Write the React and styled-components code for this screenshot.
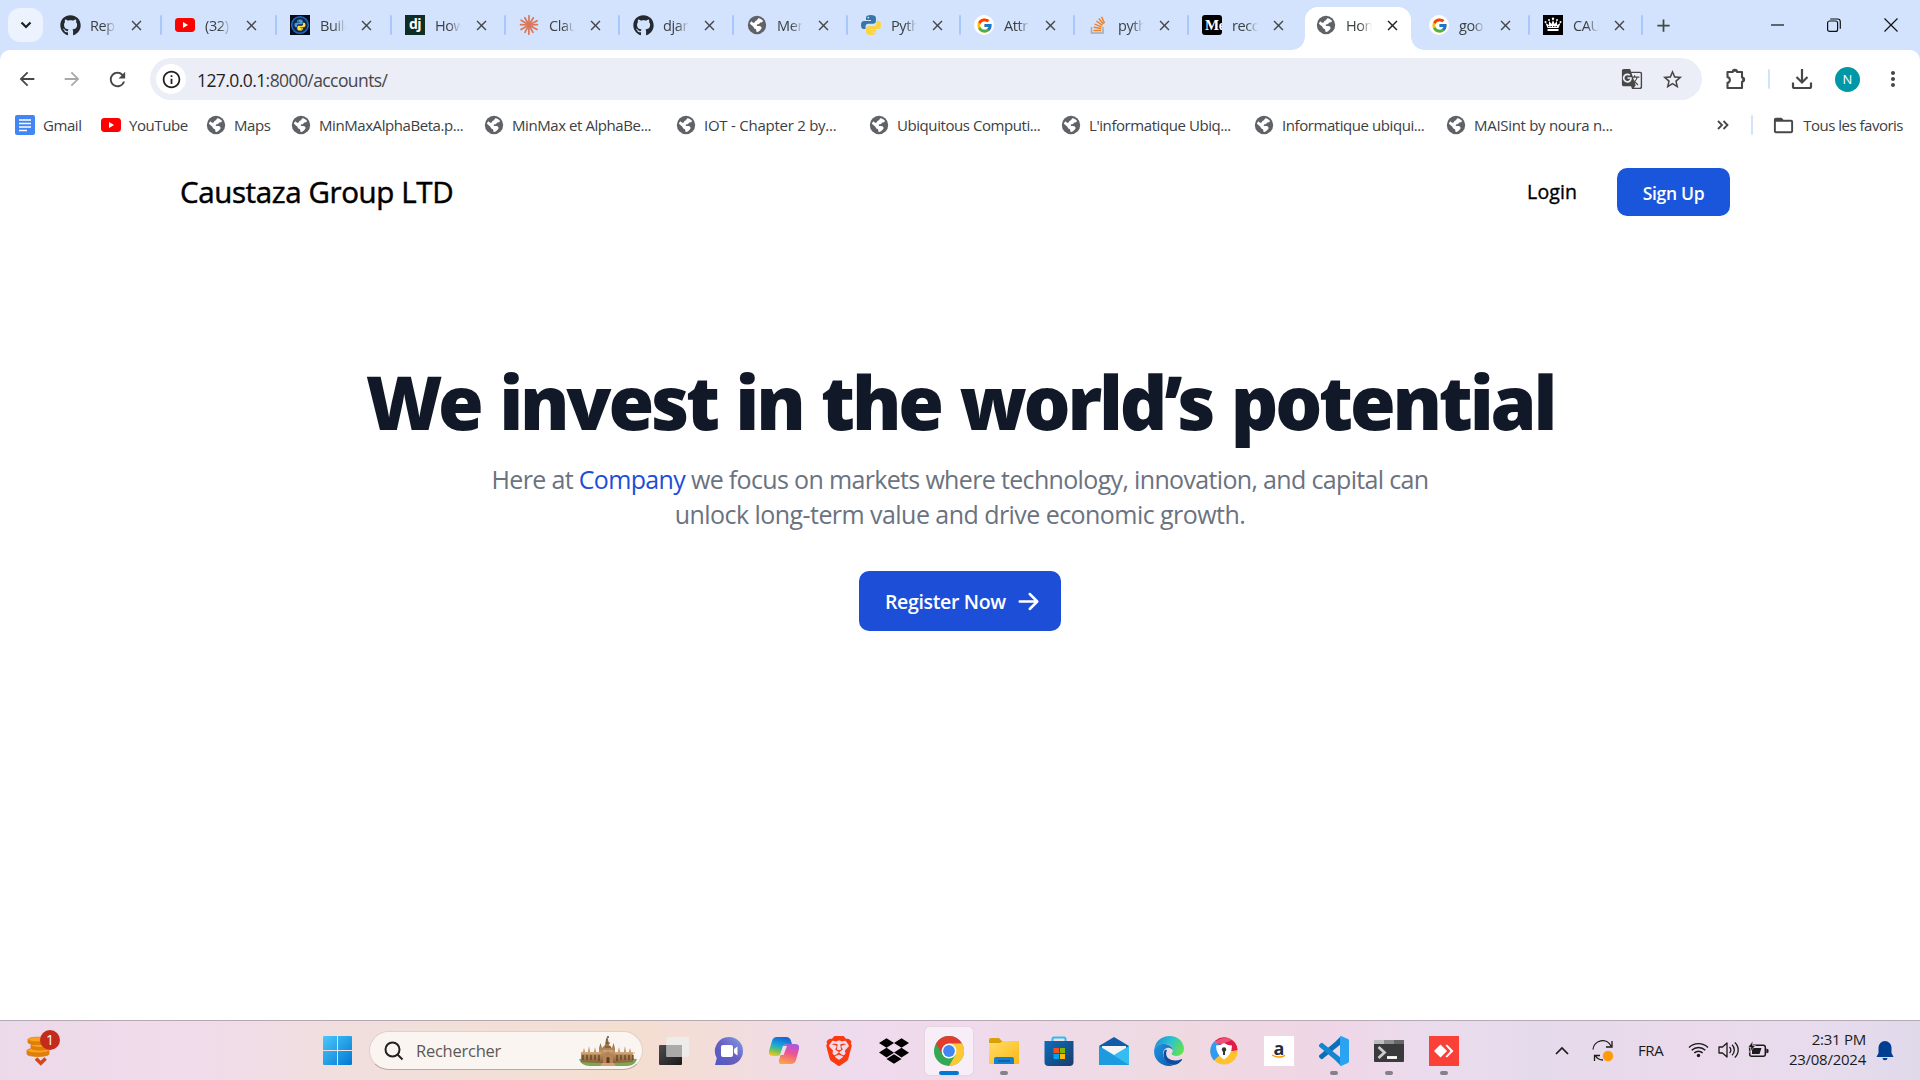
import React from "react";
import styled, { createGlobalStyle, css } from "styled-components";
import { FaGithub, FaDropbox } from "react-icons/fa";
import { FcGoogle } from "react-icons/fc";
import {
  MdArrowBack, MdArrowForward, MdRefresh, MdInfoOutline, MdStarOutline,
  MdMoreVert, MdClose, MdAdd, MdGTranslate, MdFolderOpen,
} from "react-icons/md";
import { SiBrave } from "react-icons/si";

const GlobalStyle = createGlobalStyle`
  * { box-sizing: border-box; }
  html, body { margin: 0; background: #fff; overflow: hidden; }
  body { font-family: "Open Sans", "Noto Sans", sans-serif; }
  svg { display: block; flex: none; }
`;

/* ---------- shell ---------- */
const Screen = styled.div`
  width: 1920px; height: 1080px; display: flex; flex-direction: column; overflow: hidden;
`;

/* ---------- tab strip ---------- */
const TabStrip = styled.div`
  height: 50px; background: #d3e3fd; display: flex; align-items: stretch; padding-left: 8px; flex: none;
`;
const TabSearch = styled.div`
  width: 35px; height: 34px; margin: 8px 3px 8px 0; border-radius: 12px; background: #ecf2fe;
  display: flex; align-items: center; justify-content: center; color: #1f1f1f;
`;
const TabBox = styled.div`
  position: relative; width: ${(p) => p.$w}px; flex: none; display: flex; align-items: center;
  padding-left: 14px; color: #3c4043;
  ${(p) => p.$active && css`
    &::before {
      content: ""; position: absolute; left: 3px; right: 4px; top: 7px; bottom: 0;
      background: #fff; border-radius: 13px 13px 0 0;
    }
    &::after {
      content: ""; position: absolute; left: -10px; right: -9px; bottom: 0; height: 13px;
      background:
        radial-gradient(circle at 0 0, transparent 12.5px, #fff 13px) left / 13px 13px no-repeat,
        radial-gradient(circle at 13px 0, transparent 12.5px, #fff 13px) right / 13px 13px no-repeat;
    }
  `}
`;
const TabIcon = styled.div`
  width: 20px; height: 20px; flex: none; z-index: 1; display: flex; align-items: center; justify-content: center;
`;
const TabTitle = styled.div`
  width: 36px; margin-left: 10px; white-space: nowrap; z-index: 1;
  font-size: 14.5px; letter-spacing: -0.4px; line-height: 22px; padding-top: 1px;
  mask-image: linear-gradient(90deg, #000 14px, transparent 26px);
`;
const TabClose = styled.div`
  width: 16px; margin-left: 2px; z-index: 1; color: ${(p) => (p.$active ? "#1f1f1f" : "#444746")};
`;
const TabSep = styled.div`
  width: 2px; height: 20px; background: #a8c7fa; margin-left: auto; margin-right: -1px; border-radius: 1px;
`;
const NewTab = styled.div`
  width: 42px; display: flex; align-items: center; justify-content: center; color: #444746;
`;
const WindowButtons = styled.div`
  margin-left: auto; display: flex; align-items: center; gap: 43px; padding-right: 22px;
`;

/* ---------- toolbar ---------- */
const ToolbarBack = styled.div`background: #d3e3fd; flex: none;`;
const Toolbar = styled.div`
  height: 58px; background: #fff; border-radius: 10px 10px 0 0; display: flex; align-items: center;
  padding: 0 15px 0 16px; color: #474747;
`;
const NavButton = styled.div`
  width: ${(p) => p.$w || 22}px; margin-left: ${(p) => p.$ml || 0}px; margin-right: ${(p) => p.$mr || 0}px;
  display: flex; justify-content: center; color: ${(p) => p.$c || "#474747"};
`;
const AddressBar = styled.div`
  width: 1553px; height: 42px; border-radius: 21px; background: #ebedf7; margin-right: 23px;
  display: flex; align-items: center; padding: 0 19px 0 6px;
`;
const SiteInfo = styled.div`
  width: 30px; height: 30px; border-radius: 50%; background: #fff; color: #1f1f1f;
  display: flex; align-items: center; justify-content: center;
`;
const Url = styled.div`
  margin-left: 11px; font-size: 17.5px; letter-spacing: -0.58px; color: #474747; flex: 1; padding-top: 1px;
`;
const Host = styled.span`color: #1f1f1f;`;
const Divider = styled.div`
  width: 2px; height: 20px; background: #d3e3fd; border-radius: 1px; margin-left: ${(p) => p.$ml || 0}px;
`;
const Avatar = styled.div`
  width: 25px; height: 25px; border-radius: 50%; background: #0097a7; color: #fff; margin: 0 21px 0 20px;
  font-size: 13px; display: flex; align-items: center; justify-content: center;
`;

/* ---------- bookmarks ---------- */
const Bookmarks = styled.div`
  height: 36px; background: #fff; display: flex; align-items: center; padding: 0 17px 2px 15px; flex: none;
  font-size: 15px; color: #3c4043;
`;
const Bookmark = styled.div`
  width: ${(p) => p.$w}px; flex: none; display: flex; align-items: center; gap: 8px; white-space: nowrap;
  letter-spacing: ${(p) => p.$ls || -0.43}px;
`;
const BookmarkEnd = styled.div`
  margin-left: auto; display: flex; align-items: center; letter-spacing: -0.5px; white-space: nowrap;
`;
const AllBookmarks = styled.div`display: flex; align-items: center; gap: 8px; margin-left: 19px;`;

/* ---------- page ---------- */
const Page = styled.main`flex: 1; background: #fff; display: flex; flex-direction: column;`;
const SiteNav = styled.nav`
  height: 96px; padding: 0 190px 0 180px; display: flex; align-items: center; color: #000;
`;
const Brand = styled.div`
  font-size: 29.5px; letter-spacing: -0.38px; flex: 1; white-space: nowrap; padding-bottom: 2px;
  -webkit-text-stroke: 0.5px #000;
`;
const LoginLink = styled.a`
  font-size: 19.5px; margin-right: 40px; letter-spacing: 0.1px; padding-bottom: 2px; -webkit-text-stroke: 0.35px #000;
`;
const SignUp = styled.button`
  width: 113px; height: 48px; border: 0; border-radius: 10px; background: #1a56db; color: #fff; padding: 2px 0 0;
  font: 600 17.5px "Open Sans", sans-serif; letter-spacing: -0.3px;
`;
const Hero = styled.section`
  display: flex; flex-direction: column; align-items: center; padding-top: 124px;
`;
const Headline = styled.h1`
  margin: 0; font-family: "Noto Sans", "Open Sans", sans-serif; font-weight: 900; font-size: 74px; line-height: 75px;
  letter-spacing: -3.2px; word-spacing: 2.5px; color: #111827; white-space: nowrap;
`;
const Lead = styled.p`
  margin: 23px 0 0; font-size: 25px; line-height: 35px; letter-spacing: -0.66px; color: #6b7280; text-align: center;
  white-space: nowrap;
`;
const LeadTail = styled.span`letter-spacing: -0.55px;`;
const Company = styled.span`color: #1d4ed8;`;
const Register = styled.button`
  margin-top: 39px; width: 202px; height: 60px; border: 0; border-radius: 10px; background: #1d4ed8; color: #fff;
  display: flex; align-items: center; justify-content: space-between; padding: 0 20px 0 26px;
  font: 600 19.5px "Open Sans", sans-serif; letter-spacing: -0.35px; white-space: nowrap;
`;

/* ---------- taskbar ---------- */
const Taskbar = styled.footer`
  height: 60px; flex: none; border-top: 1px solid #b5a9b4; display: flex; align-items: center; color: #1b1b1b;
  background: linear-gradient(90deg, #ecd9e9 0%, #efdbea 7%, #f0dcea 11%, #f0dfdd 18%, #f2dfd6 28%, #f4decf 33%, #f2dddc 38%, #eedbed 44%, #f0daec 50%, #eedbe6 57%, #efd9e1 62%, #efd6e6 69%, #eadced 75%, #e5daec 80%, #ebdaeb 88%, #e7dcee 95%, #e0d9ea 100%);
`;
const Widget = styled.div`width: 323px; padding-left: 26px;`;
const SearchBox = styled.div`
  width: 274px; height: 39px; margin-left: 17px; border-radius: 20px; background: #fbf5f2; border: 1px solid #e2cfc9;
  border-bottom-color: #b9a7a3; display: flex; align-items: center; padding: 0 4px 0 14px; font-size: 16.5px; color: #5d5855;
`;
const SearchText = styled.span`margin-left: 12px; letter-spacing: -0.25px; flex: 1;`;
const AppRow = styled.div`display: flex; margin-left: 3px;`;
const AppSlot = styled.div`
  width: 55.05px; height: 60px; display: flex; align-items: center; justify-content: center; position: relative;
`;
const AppTile = styled.div`
  width: 48px; height: 48px; border-radius: 5px; display: flex; align-items: center; justify-content: center;
  ${(p) => p.$on && css`background: #f8eef7; box-shadow: 0 0 1px 1px #e5d5e3;`}
`;
const Running = styled.div`
  position: absolute; bottom: 6px; left: 50%; transform: translateX(-50%); height: 4px; border-radius: 2px;
  width: ${(p) => (p.$on ? 20 : 8)}px; background: ${(p) => (p.$on ? "#0078d4" : "#86808a")};
`;
const Tray = styled.div`margin-left: auto; display: flex; align-items: center; gap: 0; padding-right: 26px;`;
const Chevron = styled.div`margin-right: 23px;`;
const Lang = styled.div`font-size: 15px; letter-spacing: -0.4px; width: 28px; margin: 0 22px 0 24px; padding-bottom: 2px;`;
const TrayIcons = styled.div`display: flex; gap: 9px; align-items: center; padding-bottom: 2px;`;
const Clock = styled.div`
  width: 80px; margin: 0 10px 0 17px; text-align: right; font-size: 15px; line-height: 20px; letter-spacing: -0.25px;
  white-space: nowrap; padding-bottom: 4px;
`;

/* ---------- drawings ---------- */
const Globe = () => (
  <svg width="20" height="20" viewBox="0 0 20 20">
    <circle cx="10" cy="10" r="9.200" fill="#5f6368" />
    <path d="M11.400 3.200c2 .3 3.600 1.300 4.700 2.900-.6 1.500-1.800 1.300-2.700 1.500-1 .2-.7 1.600-1.900 1.700-1.300.1-2 .4-1.700 1.200.6 1 2.300.3 3.600.8 1.500.7 1.500 2.300.4 3.100-1.200.8-1.400 2.200-3.500 2.500-.9.100-1.100-.5-1-1.300.100-1.200-.5-1.600-1.500-1.900-1.200-.4-.9-1.500-1.700-2.200L2.900 8.800c.3-1 .7-1.800 1.300-2.600l1.900 1.500c.9.400 1.700-.1 1.900-.9.2-1.100 1.300-.9 2-1.500.6-.6.4-1.500 1.400-2.100z" fill="#fff" />
  </svg>
);
const YouTube = () => (
  <svg width="20" height="20" viewBox="0 0 20 20">
    <rect y="3" width="20" height="14" rx="3.400" fill="#f00" /><path d="M8 7l5 3-5 3z" fill="#fff" />
  </svg>
);
const PY_BLUE = "M9.9 0C6.6 0 5 .9 5 2.8V5h5v1H3C1 6 0 7.600 0 10s1 4 2.700 4H4.500v-2.500c0-1.600 1.200-2.800 2.800-2.800h5c1.500 0 2.600-1 2.600-2.500V2.800C14.900 1 13 0 9.900 0zM7.300 1.700a.9.9 0 110 1.800.9.9 0 010-1.800z";
const Python = () => (
  <svg width="20" height="20" viewBox="0 0 20 20">
    <path d={PY_BLUE} fill="#3776ab" /><path d={PY_BLUE} fill="#ffd43b" transform="rotate(180 10 10)" />
  </svg>
);
const PythonTile = () => (
  <svg width="20" height="20" viewBox="0 0 20 20">
    <rect width="20" height="20" fill="#060b18" /><circle cx="10" cy="10" r="8.300" fill="#10284a" stroke="#1c66c4" strokeWidth="1.600" />
    <g transform="translate(4.500 4.500) scale(.55)"><path d={PY_BLUE} fill="#4b9be0" /><path d={PY_BLUE} fill="#ffe03b" transform="rotate(180 10 10)" /></g>
  </svg>
);
const LetterTile = styled.div`
  width: 20px; height: 20px; overflow: hidden; background: ${(p) => p.$bg}; color: #fff; border-radius: ${(p) => p.$r || 0}px;
  font: 700 ${(p) => p.$fs}px/${(p) => p.$lh}px ${(p) => p.$ff}; padding-left: ${(p) => p.$pl}px; letter-spacing: -0.5px;
`;
const Burst = () => (
  <svg width="20" height="20" viewBox="-10 -10 20 20" stroke="#d97757" strokeWidth="1.700" strokeLinecap="round">
    {[0, 31, 62, 88, 120, 152, 181, 209, 240, 272, 301, 330].map((a, i) => (
      <line key={a} x1="0" y1="0" x2="0" y2={i % 2 ? -8.4 : -9.2} transform={`rotate(${a})`} />
    ))}
  </svg>
);
const GoogleDisc = styled.div`
  width: 20px; height: 20px; border-radius: 50%; background: #fff; display: flex; align-items: center; justify-content: center;
`;
const Google = () => <GoogleDisc><FcGoogle size={17} /></GoogleDisc>;
const Stack = () => (
  <svg width="20" height="20" viewBox="0 0 20 20" fill="none" strokeWidth="1.500">
    <path d="M3.500 12v6h11.500v-6" stroke="#a9a9ae" /><path d="M5.500 15.500h7.500M5.700 12.300l7.400 1.200M6.600 9.100l6.900 2.800M8.400 6l6 4.300M10.800 3.500l4.600 5.600M13.600 1.700l2.900 6.600" stroke="#f48024" />
  </svg>
);
const Crown = () => (
  <svg width="20" height="20" viewBox="0 0 20 20">
    <rect width="20" height="20" fill="#000" />
    <g fill="#fff"><path d="M4.500 13L2.500 8l3.400 2L6 6l2.500 3L10 5l1.500 4L14 6l.1 4 3.400-2-2 5z" /><rect x="4.500" y="14" width="11" height="2" />
      <circle cx="2.500" cy="7" r="1" /><circle cx="6" cy="5" r="1" /><circle cx="10" cy="3.800" r="1.200" /><circle cx="14" cy="5" r="1" /><circle cx="17.500" cy="7" r="1" /></g>
    <path d="M5 11.500h10" stroke="#000" strokeWidth=".8" strokeDasharray="1.500 1" />
  </svg>
);
const DocIcon = () => (
  <svg width="20" height="20" viewBox="0 0 20 20">
    <rect width="20" height="20" rx="2" fill="#4285f4" /><path d="M4 5h12M4 8.500h12M4 12h12M4 15.500h8" stroke="#fff" strokeWidth="1.600" />
  </svg>
);
const Puzzle = () => (
  <svg width="22" height="22" viewBox="0 0 22 22" fill="none" stroke="#474747" strokeWidth="2.100" strokeLinejoin="round">
    <path d="M2.500 4h5.300a2.100 2.100 0 014.200 0H17v5.500a2.100 2.100 0 010 4.200V20H2.500v-5.200a2.900 2.900 0 000-5.700z" />
    <path d="M8 3.800a2 2 0 014 0zM17.200 9.700a2 2 0 010 4z" fill="#474747" stroke="none" />
  </svg>
);
const Download = () => (
  <svg width="22" height="22" viewBox="0 0 22 22" fill="none" stroke="#474747" strokeWidth="2.200">
    <path d="M11 1v13M5.500 9l5.500 5.500L16.500 9M2 14.500v4q0 1.500 1.500 1.500h15q1.500 0 1.500-1.500v-4" />
  </svg>
);
const Coins = () => (
  <svg width="36" height="44" viewBox="0 0 36 44">
    <g stroke="#d97706" strokeWidth=".7">
      <path d="M1 21.500V25c0 3.300 22 3.300 22 0v-3.500z" fill="#e07f0a" /><ellipse cx="12" cy="21.500" rx="11" ry="2.500" fill="#fba31f" />
      <path d="M5 16v3c0 2.800 18 2.800 18 0v-3z" fill="#e07f0a" /><ellipse cx="14" cy="16" rx="9" ry="2.300" fill="#fba31f" />
      <path d="M2 10.500v3c0 2.800 19 2.800 19 0v-3z" fill="#e07f0a" /><ellipse cx="11.500" cy="10.500" rx="9.500" ry="2.300" fill="#fba31f" />
    </g>
    <path d="M10 29.500l4.800 4.800 4.800-4.800" fill="none" stroke="#cf4a18" strokeWidth="3.600" />
    <circle cx="24" cy="11" r="10" fill="#c42b1c" />
    <text x="24" y="16" textAnchor="middle" fill="#fff" fontSize="14" fontFamily="Open Sans, sans-serif">1</text>
  </svg>
);
const WindowsLogo = () => (
  <svg width="29" height="29" viewBox="0 0 29 29">
    <defs><linearGradient id="win" x1="0" y1="0" x2="1" y2="1"><stop stopColor="#4cc8fb" /><stop offset="1" stopColor="#0078d4" /></linearGradient></defs>
    <path d="M1 0h13v14H0V1q0-1 1-1zM15 0h13q1 0 1 1v13H15zM0 15h14v14H1q-1 0-1-1zM15 15h14v13q0 1-1 1H15z" fill="url(#win)" />
  </svg>
);
const Castle = () => (
  <svg width="60" height="32" viewBox="0 0 60 32">
    <defs><linearGradient id="sand" x1="0" y1="0" x2="0" y2="1"><stop stopColor="#7d5a35" /><stop offset=".6" stopColor="#c09465" /><stop offset="1" stopColor="#8a6037" /></linearGradient></defs>
    <path d="M1 24q29-3 58 0-2 7-10 7H12Q3 31 1 24z" fill="#7ba653" /><path d="M27 24h6l5 7H22z" fill="#d3a173" />
    <path d="M3 27V17h2l1-4 1 4h3l1-6 1 6h4l1-5 1 5h3v-4l1.500-5 1.500 5 1-1 2-2 1-6 1-2 1 2 1 6 2 2 1 1 1.500-5 1.500 5v4h3l1-5 1 5h4l1-6 1 6h3l1-4 1 4h2v10l-20 1H23z" fill="url(#sand)" />
    <path d="M5 20v5M9 20v5M13 20v5M17 20v5M21 20v6M39 20v6M43 20v5M47 20v5M51 20v5M55 20v5" stroke="#5b3c1e" strokeWidth="1.200" />
    <path d="M3 18h20M37 18h20M25 16h10" stroke="#dcb98b" strokeWidth="1" />
    <path d="M25 28v-8l5-4 5 4v8z" fill="#b48556" /><path d="M28.500 28v-5q1.500-2 3 0v5z" fill="#5c3c20" />
    <circle cx="30" cy="2" r="1" fill="#6d5030" /><path d="M27 12h6M28 8h4" stroke="#6b4823" strokeWidth="1" />
  </svg>
);
const Svg30 = ({ children }) => <svg width="30" height="30" viewBox="0 0 30 30">{children}</svg>;
const TaskView = () => (
  <Svg30>
    <defs><linearGradient id="tv" x2="1" y2="1"><stop stopColor="#4b4b4b" /><stop offset="1" stopColor="#1b1b1b" /></linearGradient></defs>
    <rect y="9" width="23" height="20" rx="1" fill="url(#tv)" /><rect x="7.500" y="1" width="22.500" height="20" rx="1" fill="#ececec" opacity=".95" /><path d="M7.500 9H23v12H7.500z" fill="#aaa" />
  </Svg30>
);
const Meet = () => (
  <Svg30>
    <defs><linearGradient id="mt" x1="0" y1="1" x2="1" y2="0"><stop stopColor="#5058c4" /><stop offset=".5" stopColor="#6a5fc0" /><stop offset="1" stopColor="#7fa4ec" /></linearGradient></defs>
    <path d="M15 1a14 14 0 110 28H1l1.800-7A14 14 0 0115 1z" fill="url(#mt)" /><rect x="7" y="9" width="12" height="12" rx="2" fill="#fff" /><path d="M20 13l3.500-2.500v9L20 17z" fill="#fff" />
  </Svg30>
);
const Copilot = () => (
  <Svg30>
    <defs>
      <linearGradient id="cpa" x1=".6" y1="0" x2=".3" y2="1"><stop stopColor="#1763d6" /><stop offset=".45" stopColor="#18a7d8" /><stop offset=".75" stopColor="#6fc35b" /><stop offset="1" stopColor="#f3c61f" /></linearGradient>
      <linearGradient id="cpb" x1=".7" y1="0" x2=".4" y2="1"><stop stopColor="#a35be6" /><stop offset=".45" stopColor="#ee5293" /><stop offset="1" stopColor="#fba248" /></linearGradient>
    </defs>
    <path d="M21.500 28H13q-4 0-3-4l4-13q1-3 4-3h8q5 0 4 5l-3 11q-1 4-5.500 4z" fill="url(#cpb)" />
    <path d="M8 1h9q4 0 5 4l1 3h-5q-3 0-4 3l-2 6q-1 3-4 3H4q-5 0-4-5L3 5q1-4 5-4z" fill="url(#cpa)" /><path d="M14 10h4l-3.500 9H11z" fill="#f1ddeb" />
  </Svg30>
);
const Chrome = () => (
  <Svg30>
    <circle cx="15" cy="15" r="15" fill="#34a853" />
    <path d="M15 0a15 15 0 0113 7.500H15L8.500 18.800 2 7.500A15 15 0 0115 0z" fill="#e33b2e" />
    <path d="M28 7.500A15 15 0 0115 30l6.500-11.200L15 7.500z" fill="#fcc934" />
    <circle cx="15" cy="15" r="7.400" fill="#fff" /><circle cx="15" cy="15" r="5.900" fill="#4285f4" />
  </Svg30>
);
const Explorer = () => (
  <Svg30>
    <defs><linearGradient id="fx" x2="1" y2="1"><stop stopColor="#ffdd6b" /><stop offset="1" stopColor="#fbb813" /></linearGradient></defs>
    <path d="M0 4q0-2 2-2h8l3 3h15q2 0 2 2v5H0z" fill="#d9a009" /><path d="M0 7h11l3-2h16v23H0z" fill="url(#fx)" />
    <path d="M5 28v-5q0-2 2-2h16q2 0 2 2v5z" fill="#1280d4" /><path d="M9 25h12" stroke="#0a4f94" strokeWidth="1.200" />
  </Svg30>
);
const Store = () => (
  <Svg30>
    <defs><linearGradient id="st" x2="1" y2="1"><stop stopColor="#0d6dbd" /><stop offset="1" stopColor="#1a3c68" /></linearGradient></defs>
    <path d="M8.500 7V3q0-1.500 1.500-1.500h10q1.500 0 1.500 1.500v4" fill="none" stroke="#2dbdf0" strokeWidth="2" /><path d="M.5 5h29v21q0 4-4 4h-21q-4 0-4-4z" fill="url(#st)" />
    <path d="M9.500 12H15v5H9.500z" fill="#f25022" /><path d="M16 12h5v5h-5z" fill="#7fba00" /><path d="M9.500 18H15v5H9.500z" fill="#00a4ef" /><path d="M16 18h5v5h-5z" fill="#ffb900" />
  </Svg30>
);
const Mail = () => (
  <Svg30>
    <path d="M0 10L15 1l15 9v8H0z" fill="#0f5cab" /><path d="M3 10h24v10H3z" fill="#f4f4f4" />
    <path d="M0 10l15 9 15-9v19H0z" fill="#35bdf0" /><path d="M0 10l30 19H0z" fill="#1e9be0" />
  </Svg30>
);
const Edge = () => (
  <Svg30>
    <defs>
      <linearGradient id="eg" x1="0" y1=".2" x2="1" y2=".6"><stop stopColor="#1c8ddb" /><stop offset=".5" stopColor="#2cc3d0" /><stop offset="1" stopColor="#66e04e" /></linearGradient>
      <linearGradient id="eh" x1="0" y1="0" x2="1" y2="1"><stop stopColor="#2196e0" /><stop offset="1" stopColor="#0a5ab0" /></linearGradient>
    </defs>
    <path d="M.3 13C1.500 5 8 0 15.500 0 24 0 30 6 30 12.800c0 4.500-3.500 7.200-7.500 7.200-3 0-5-1-5-2.200 0-.8 1.300-1.200 1.300-3.600 0-3.400-3.300-6.200-8-6.200C5.500 8 1.500 10 .3 13z" fill="url(#eg)" />
    <path d="M.1 14.500C.5 10.500 4.500 8 9.500 8c5 0 9.300 2.500 9.300 6.500-1-2-3-3-5-2.700-4.300.6-6.300 6-3.500 10.700 2.300 4 5.500 6.500 9 6.700-1 .5-2.800.8-4.300.8C6.500 30-.5 23 .1 14.500z" fill="url(#eh)" />
    <path d="M10.500 14.500c-2.500 4.500-.5 11 5.500 14 4 1.500 9.500-.5 12-4.500.4-.8-.1-1.200-.8-.8-7 3-14.500.3-15-4.700-.1-1.500 0-2.800.8-4.500-.8-.3-1.900-.2-2.500.5z" fill="#0c4ea0" />
  </Svg30>
);
const LockBrowser = () => (
  <Svg30>
    <circle cx="15" cy="15" r="13.600" fill="#ffc22e" /><path d="M15 15L5 24.500A13.600 13.600 0 017 4z" fill="#2f9bf7" />
    <path d="M15 15L6.500 4.400A13.600 13.600 0 0128.600 14l-5 1z" fill="#e31b4b" /><path d="M5 7q9-8 18-3l-10 4z" fill="#f06a8a" opacity=".7" />
    <path d="M15 7q4 2.500 8 2.500 0 9-8 14-8-5-8-14 4 0 8-2.500z" fill="#fff" /><circle cx="15" cy="13.500" r="2.200" fill="#333" /><path d="M14 14h2v5h-2z" fill="#333" />
  </Svg30>
);
const VsCode = () => (
  <Svg30>
    <path d="M22 0l-6 6L0 19.500q-.5 1 0 1.600L2 23q.8.400 1.500 0L22 8z" fill="#0a6fb8" />
    <path d="M22 30l-6-6L0 10.500q-.5-1 0-1.600L2 7q.8-.4 1.500 0L22 22z" fill="#1287d0" /><path d="M22 0l7 3q1 .6 1 2v20q0 1.400-1 2l-7 3q-1 .2-1-1V1q0-1.200 1-1z" fill="#2aa4f2" />
  </Svg30>
);
const Terminal = () => (
  <Svg30>
    <path d="M0 4h30v21q0 1-1 1H1q-1 0-1-1z" fill="#3a3a3c" /><path d="M0 4h10v4H0z" fill="#bdbdbd" /><path d="M10 4h10v4H10z" fill="#8b8b8b" /><path d="M20 4h10v4H20z" fill="#666" />
    <path d="M4.500 11l6 5.500-6 5.500" fill="none" stroke="#ccc" strokeWidth="2.800" /><path d="M13 21.500h10" stroke="#fff" strokeWidth="2.800" />
  </Svg30>
);
const AnyDesk = () => (
  <Svg30>
    <rect width="30" height="30" fill="#fb4038" /><path d="M5 15l6.500-6.500L18 15l-6.500 6.500z" fill="#fff" /><path d="M16.500 9.500L18 8.500l6.500 6.500-6.500 6.500-1.500-1 5-5.500z" fill="#fff" />
  </Svg30>
);
const AmazonMark = () => (
  <Svg30>
    <rect width="30" height="30" fill="#fff" />
    <text x="15" y="18.500" textAnchor="middle" fontFamily="Open Sans, sans-serif" fontWeight="700" fontSize="18" fill="#232f3e">a</text>
    <path d="M8 19q7 4 13 .3" fill="none" stroke="#ff9900" strokeWidth="1.400" />
  </Svg30>
);
const Sync = () => (
  <svg width="22" height="22" viewBox="0 0 22 22" fill="none" stroke="#1b1b1b" strokeWidth="1.300">
    <path d="M1 9.500A9.500 9.500 0 0119 6M20 1v6h-6M11 20a9 9 0 01-7.500-4M2.500 21v-5.500H8" /><circle cx="16" cy="16" r="5.200" fill="#ff9a0a" stroke="none" />
  </svg>
);
const Wifi = () => (
  <svg width="21" height="18" viewBox="0 0 21 18" fill="none" stroke="#1b1b1b" strokeWidth="1.400">
    <path d="M1 6.500a13.500 13.500 0 0119 0M3.700 9.300a9.600 9.600 0 0113.600 0M6.300 12a5.900 5.900 0 018.400 0" /><circle cx="10.500" cy="14.500" r="1.700" fill="#1b1b1b" stroke="none" />
  </svg>
);
const Speaker = () => (
  <svg width="21" height="18" viewBox="0 0 21 18" fill="none" stroke="#1b1b1b" strokeWidth="1.300" strokeLinejoin="round">
    <path d="M1 6v6h3.500l4.500 4V2L4.500 6zM11.500 6a4 4 0 010 6M14 3.800a7 7 0 010 10.400M16.800 1.500a10 10 0 010 15" />
  </svg>
);
const Battery = () => (
  <svg width="21" height="18" viewBox="0 0 21 18">
    <rect x="1.700" y="4.200" width="15.600" height="11" rx="2" fill="none" stroke="#1b1b1b" strokeWidth="1.500" /><path d="M4 7h9.500l-2 6H4zM18.300 7.500l2.200 1v3l-2.200 1z" fill="#1b1b1b" />
    <path d="M4.800 0L0 6.500h3L1.500 11.500 7.500 4.500h-3z" fill="#1b1b1b" stroke="#e9dbea" strokeWidth=".6" />
  </svg>
);
const Bell = () => (
  <svg width="18" height="20" viewBox="0 0 18 20" fill="#003e92"><path d="M9 0a6.500 6.500 0 016.500 6.500V12l2 4H.5l2-4V6.500A6.500 6.500 0 019 0zM6.500 17h5a2.500 2.200 0 01-5 0z" /></svg>
);

/* ---------- data ---------- */
const GitHub = () => <FaGithub size={21} color="#24292f" />;
const Django = () => <LetterTile $bg="#0c2e24" $fs={14} $lh={17} $pl={4} $ff='"Open Sans", sans-serif'>dj</LetterTile>;
const Medium = () => <LetterTile $bg="#000" $fs={15} $lh={20} $pl={3} $r={3} $ff='"Liberation Serif", serif'>Me</LetterTile>;

const TABS = [
  { t: "Rep", I: GitHub, w: 115 }, { t: "(32)", I: YouTube, w: 115 }, { t: "Build", I: PythonTile, w: 115 },
  { t: "How", I: Django, w: 114 }, { t: "Clau", I: Burst, w: 114 }, { t: "djan", I: GitHub, w: 114 },
  { t: "Men", I: Globe, w: 114 }, { t: "Pyth", I: Python, w: 113 }, { t: "Attr", I: Google, w: 114 },
  { t: "pyth", I: Stack, w: 114 }, { t: "reco", I: Medium, w: 114, plain: true }, { t: "Hom", I: Globe, w: 113, active: true, plain: true },
  { t: "goo", I: Google, w: 114 }, { t: "CAU", I: Crown, w: 113 },
];
const BOOKMARKS = [
  { t: "Gmail", I: DocIcon, w: 86 }, { t: "YouTube", I: YouTube, w: 105 }, { t: "Maps", I: Globe, w: 85 },
  { t: "MinMaxAlphaBeta.p...", I: Globe, w: 193 }, { t: "MinMax et AlphaBe...", I: Globe, w: 192 },
  { t: "IOT - Chapter 2 by...", I: Globe, w: 193, ls: -0.25 }, { t: "Ubiquitous Computi...", I: Globe, w: 192 },
  { t: "L'informatique Ubiq...", I: Globe, w: 193 }, { t: "Informatique ubiqui...", I: Globe, w: 192 },
  { t: "MAISint by noura n...", I: Globe, w: 193, ls: -0.3 },
];
const Brave = () => <SiBrave size={30} color="#fb3a12" />;
const Dropbox = () => <FaDropbox size={30} color="#000" />;
const APPS = [
  { I: TaskView }, { I: Meet }, { I: Copilot }, { I: Brave }, { I: Dropbox }, { I: Chrome, on: true, run: true },
  { I: Explorer, run: true }, { I: Store }, { I: Mail }, { I: Edge }, { I: LockBrowser }, { I: AmazonMark },
  { I: VsCode, run: true }, { I: Terminal, run: true }, { I: AnyDesk, run: true },
];

export default function App() {
  return (
    <Screen>
      <GlobalStyle />
      <TabStrip>
        <TabSearch>
          <svg width="12" height="12" viewBox="0 0 12 12" fill="none" stroke="currentColor" strokeWidth="2.200"><path d="M1.500 3.500L6 8l4.500-4.500" /></svg>
        </TabSearch>
        {TABS.map(({ t, I, w, active, plain }, i) => (
          <TabBox key={i} $w={w} $active={active}>
            <TabIcon><I /></TabIcon>
            <TabTitle>{t}</TabTitle>
            <TabClose $active={active}><MdClose size={17} /></TabClose>
            {!plain && <TabSep />}
          </TabBox>
        ))}
        <NewTab><MdAdd size={21} /></NewTab>
        <WindowButtons>
          <svg width="13" height="14" viewBox="0 0 13 14" stroke="#111" strokeWidth="1.200"><path d="M0 7h13" /></svg>
          <svg width="14" height="14" viewBox="0 0 14 14" fill="none" stroke="#111" strokeWidth="1.200"><rect x=".6" y="3" width="10" height="10.400" rx="2" /><path d="M3.200 1h7.300q2.800 0 2.800 2.800v6.900" /></svg>
          <svg width="14" height="14" viewBox="0 0 14 14" stroke="#111" strokeWidth="1.200"><path d="M.5.500l13 13M13.500.500l-13 13" /></svg>
        </WindowButtons>
      </TabStrip>
      <ToolbarBack>
        <Toolbar>
          <NavButton $mr={23}><MdArrowBack size={22} /></NavButton>
          <NavButton $mr={23} $c="#a9a9a9"><MdArrowForward size={22} /></NavButton>
          <NavButton $mr={22}><MdRefresh size={23} /></NavButton>
          <AddressBar>
            <SiteInfo><MdInfoOutline size={21} /></SiteInfo>
            <Url><Host>127.0.0.1</Host>:8000/accounts/</Url>
            <NavButton $mr={18}><MdGTranslate size={22} /></NavButton>
            <NavButton><MdStarOutline size={23} /></NavButton>
          </AddressBar>
          <NavButton $mr={21}><Puzzle /></NavButton>
          <Divider />
          <NavButton $ml={21} $mr={2}><Download /></NavButton>
          <Avatar>N</Avatar>
          <MdMoreVert size={24} />
        </Toolbar>
      </ToolbarBack>
      <Bookmarks>
        {BOOKMARKS.map(({ t, I, w, ls }) => (
          <Bookmark key={t} $w={w} $ls={ls}><I />{t}</Bookmark>
        ))}
        <BookmarkEnd>
          <svg width="12" height="10" viewBox="0 0 12 10" fill="none" stroke="#474747" strokeWidth="1.800"><path d="M1 1l4 4-4 4M6.500 1l4 4-4 4" /></svg>
          <Divider $ml={22} />
          <AllBookmarks><MdFolderOpen size={23} color="#474747" />Tous les favoris</AllBookmarks>
        </BookmarkEnd>
      </Bookmarks>
      <Page>
        <SiteNav>
          <Brand>Caustaza Group LTD</Brand>
          <LoginLink>Login</LoginLink>
          <SignUp>Sign Up</SignUp>
        </SiteNav>
        <Hero>
          <Headline>We invest in the world’s potential</Headline>
          <Lead>
            Here at <Company>Company</Company> we focus on markets where technology, innovation, and capital can
            <br /><LeadTail>unlock long-term value and drive economic growth.</LeadTail>
          </Lead>
          <Register>
            Register Now
            <svg width="25" height="25" viewBox="0 0 20 20" fill="#fff"><path fillRule="evenodd" d="M10.293 3.293a1 1 0 011.414 0l6 6a1 1 0 010 1.414l-6 6a1 1 0 01-1.414-1.414L14.586 11H3a1 1 0 110-2h11.586l-4.293-4.293a1 1 0 010-1.414z" clipRule="evenodd" /></svg>
          </Register>
        </Hero>
      </Page>
      <Taskbar>
        <Widget><Coins /></Widget>
        <WindowsLogo />
        <SearchBox>
          <svg width="20" height="20" viewBox="0 0 20 20" fill="none" stroke="#222" strokeWidth="2"><circle cx="8.500" cy="8.500" r="7" /><path d="M13.500 13.500l5 5" /></svg>
          <SearchText>Rechercher</SearchText>
          <Castle />
        </SearchBox>
        <AppRow>
          {APPS.map(({ I, on, run }, i) => (
            <AppSlot key={i}><AppTile $on={on}><I /></AppTile>{run && <Running $on={on} />}</AppSlot>
          ))}
        </AppRow>
        <Tray>
          <Chevron>
            <svg width="14" height="9" viewBox="0 0 14 9" fill="none" stroke="#1b1b1b" strokeWidth="1.700"><path d="M1 8l6-6 6 6" /></svg>
          </Chevron>
          <Sync />
          <Lang>FRA</Lang>
          <TrayIcons><Wifi /><Speaker /><Battery /></TrayIcons>
          <Clock>2:31 PM<br />23/08/2024</Clock>
          <Bell />
        </Tray>
      </Taskbar>
    </Screen>
  );
}
